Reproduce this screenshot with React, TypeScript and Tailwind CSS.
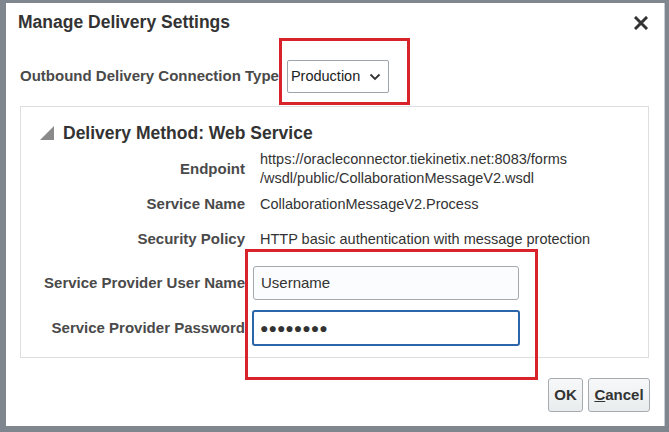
import React from 'react'

const labelCls = "w-[224px] shrink-0 text-right text-[15px] font-bold text-[#4a4a4a]"
const valueCls = "pl-[15px] text-[14.5px] text-[#333] leading-[19px]"

function Row({ label, children, className }: { label: string; children: React.ReactNode; className: string }) {
  return (
    <div className={`flex items-center ${className}`}>
      <div className={labelCls}>{label}</div>
      {children}
    </div>
  )
}

export default function App() {
  return (
    <div className="relative w-[669px] h-[432px] bg-[#80868d] pl-[6px] pt-[3px] pr-[4px] pb-[6px] font-['Liberation_Sans',Arial,sans-serif] overflow-hidden">
      <div className="h-full bg-white flex flex-col border-r border-[#c9cdd1]">
        {/* title bar */}
        <div className="h-[38px] flex items-center pl-[12px] pr-[16px]">
          <h1 className="text-[17.5px] font-bold text-[#333]">Manage Delivery Settings</h1>
          <svg className="ml-auto mt-[1px]" width="14" height="14" viewBox="0 0 14 14">
            <path d="M2 2 L12 12 M12 2 L2 12" stroke="#333" strokeWidth="3" strokeLinecap="square" />
          </svg>
        </div>

        {/* connection type */}
        <div className="mt-[19px] h-[33px] flex items-center pl-[14px]">
          <span className="text-[15px] font-bold text-[#4a4a4a]">Outbound Delivery Connection Type</span>
          <div className="ml-[8px] w-[102px] h-[33px] border border-[#9ea4aa] rounded-[2px] bg-white flex items-center pl-[3px] pr-[7px]">
            <span className="text-[14.5px] text-[#222]">Production</span>
            <svg className="ml-auto" width="12" height="8" viewBox="0 0 12 8">
              <path d="M1.5 1.5 L6 6 L10.5 1.5" fill="none" stroke="#333" strokeWidth="1.8" />
            </svg>
          </div>
        </div>

        {/* delivery method panel */}
        <div className="mt-[13px] ml-[14px] mr-[15px] border border-[#dcdfe2] pb-[11px]">
          <div className="mt-[13px] h-[26px] flex items-center pl-[19px]">
            <svg width="14" height="14" viewBox="0 0 14 14">
              <polygon points="0,14 14,14 14,0" fill="#8a8a8a" />
            </svg>
            <span className="ml-[9px] text-[17.5px] font-bold text-[#333]">Delivery Method: Web Service</span>
          </div>

          <Row label="Endpoint" className="mt-[4px] h-[38px]">
            <div className={valueCls}>
              <div>https://oracleconnector.tiekinetix.net:8083/forms</div>
              <div>/wsdl/public/CollaborationMessageV2.wsdl</div>
            </div>
          </Row>
          <Row label="Service Name" className="mt-[3px] h-[26px]">
            <div className={valueCls}>CollaborationMessageV2.Process</div>
          </Row>
          <Row label="Security Policy" className="mt-[9px] h-[26px]">
            <div className={valueCls}>HTTP basic authentication with message protection</div>
          </Row>
          <Row label="Service Provider User Name" className="mt-[14px] h-[34px]">
            <div className="ml-[8px] w-[266px] h-[34px] border border-[#a3a9af] rounded-[3px] bg-[#fbfcfd] flex items-center pl-[7px] text-[15px] text-[#333]">
              Username
            </div>
          </Row>
          <Row label="Service Provider Password" className="mt-[10px] h-[36px]">
            <div className="ml-[7px] w-[268px] h-[36px] border-2 border-[#2b66ab] rounded-[3px] bg-white flex items-center pl-[6px] text-[14px] text-[#333]">
              ●●●●●●●●
            </div>
          </Row>
        </div>

        {/* buttons */}
        <div className="mt-[20px] flex justify-end gap-[5px] pr-[14px]">
          <button className="w-[35px] h-[34px] border border-[#a6abb0] rounded-[3px] bg-gradient-to-b from-[#f7f8f9] to-[#e9ecee] text-[15px] font-bold text-[#333]">
            OK
          </button>
          <button className="w-[62px] h-[34px] border border-[#a6abb0] rounded-[3px] bg-gradient-to-b from-[#f7f8f9] to-[#e9ecee] text-[15px] font-bold text-[#333]">
            <span className="underline">C</span>ancel
          </button>
        </div>
      </div>

      {/* annotation boxes */}
      <div className="absolute left-[279px] top-[38px] w-[131px] h-[67px] border-[3px] border-[#d9232b]" />
      <div className="absolute left-[245px] top-[249px] w-[293px] h-[131px] border-[3px] border-[#d9232b]" />
    </div>
  )
}
